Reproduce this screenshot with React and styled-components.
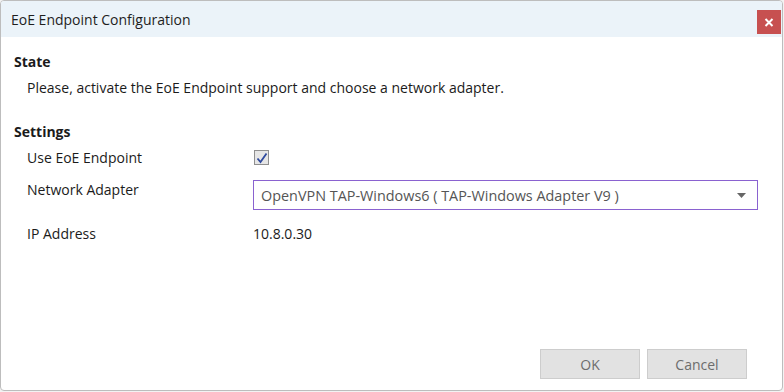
import React from "react";
import styled, { createGlobalStyle } from "styled-components";

const Global = createGlobalStyle`
  html, body { margin: 0; padding: 0; background: #f3f3f3; }
  body { font-family: "Open Sans", "Noto Sans", sans-serif; }
  * { box-sizing: border-box; }
`;

const Dialog = styled.div`
  width: 783px;
  height: 391px;
  background: #ffffff;
  border: 1px solid #bdbdbd;
  border-radius: 4px;
  display: flex;
  flex-direction: column;
  overflow: hidden;
  color: #1b1b1b;
  font-size: 14px;
`;

const TitleBar = styled.div`
  height: 36px;
  flex: none;
  background: #ebf3f9;
  display: flex;
  align-items: center;
  justify-content: space-between;
  padding: 0 1px 0 10px;
`;

const Title = styled.span`
  font-size: 14px;
  color: #1e1e1e;
`;

const CloseButton = styled.button`
  width: 24px;
  height: 24px;
  margin-top: 6px;
  border: none;
  padding: 0;
  background: #c75050;
  display: flex;
  align-items: center;
  justify-content: center;
`;

const Body = styled.div`
  padding: 15px 0 0 13px;
  display: flex;
  flex-direction: column;
`;

const SectionTitle = styled.div`
  font-weight: 700;
  line-height: 20px;
  margin-top: ${(p) => p.$top || 0}px;
`;

const Message = styled.div`
  line-height: 20px;
  margin: 6px 0 0 13px;
`;

const Grid = styled.div`
  display: grid;
  grid-template-columns: 226px 505px;
  align-items: start;
  margin-left: 13px;
`;

const Label = styled.div`
  line-height: 20px;
  margin-top: ${(p) => p.$top || 0}px;
`;

const Value = styled.div`
  line-height: 20px;
  margin-top: ${(p) => p.$top || 0}px;
  display: flex;
  align-items: center;
`;

const CheckBox = styled.span`
  width: 15px;
  height: 15px;
  border: 1px solid #8f8f8f;
  background: #e6e6e6;
  display: flex;
  align-items: center;
  justify-content: center;
  margin-left: 1px;
`;

const Select = styled.div`
  margin-top: ${(p) => p.$top || 0}px;
  height: 30px;
  border: 1px solid #8a62d0;
  display: flex;
  align-items: center;
  justify-content: space-between;
  padding: 0 11px 0 7px;
  color: #555555;
  font-size: 14.4px;
`;

const Footer = styled.div`
  margin-top: auto;
  display: flex;
  justify-content: flex-end;
  gap: 7px;
  padding: 0 35px 11px 0;
`;

const Button = styled.button`
  width: 100px;
  height: 30px;
  border: 1px solid #cdcdcd;
  background: #e2e2e2;
  color: #6d6d6d;
  font-family: inherit;
  font-size: 14px;
  padding: 0;
`;

export default function App() {
  return (
    <>
      <Global />
      <Dialog>
        <TitleBar>
          <Title>EoE Endpoint Configuration</Title>
          <CloseButton aria-label="close">
            <svg width="10" height="9" viewBox="0 0 10 9">
              <path d="M1.5 1 L8.5 8 M8.5 1 L1.5 8" stroke="#fff" strokeWidth="2" />
            </svg>
          </CloseButton>
        </TitleBar>
        <Body>
          <SectionTitle>State</SectionTitle>
          <Message>
            Please, activate the EoE Endpoint support and choose a network adapter.
          </Message>
          <SectionTitle $top={24}>Settings</SectionTitle>
          <Grid>
            <Label $top={6}>Use EoE Endpoint</Label>
            <Value $top={8}>
              <CheckBox>
                <svg width="12" height="12" viewBox="0 0 12 12">
                  <path d="M1.5 6.5 L4.5 10 L10.5 1.5" fill="none" stroke="#2f4a9e" strokeWidth="1.8" />
                </svg>
              </CheckBox>
            </Value>
            <Label $top={12}>Network Adapter</Label>
            <Select $top={12}>
              <span>OpenVPN TAP-Windows6 ( TAP-Windows Adapter V9 )</span>
              <svg width="9" height="5" viewBox="0 0 9 5">
                <path d="M0 0 H9 L4.5 5 Z" fill="#666" />
              </svg>
            </Select>
            <Label $top={14}>IP Address</Label>
            <Value $top={14}>10.8.0.30</Value>
          </Grid>
        </Body>
        <Footer>
          <Button>OK</Button>
          <Button>Cancel</Button>
        </Footer>
      </Dialog>
    </>
  );
}
